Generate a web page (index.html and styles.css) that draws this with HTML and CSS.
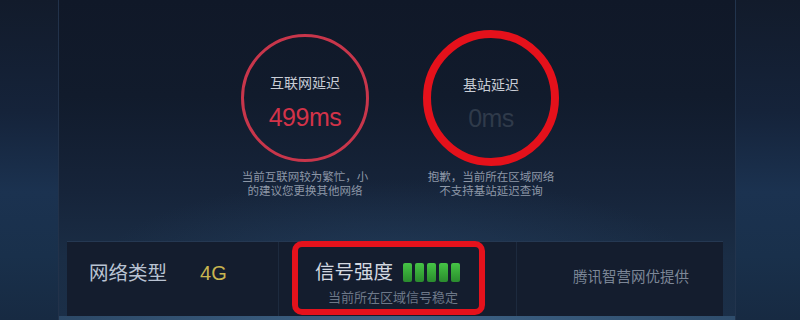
FILE: index.html
```html
<!DOCTYPE html>
<html lang="zh-CN">
<head>
<meta charset="utf-8">
<title>网络延迟</title>
<link rel="stylesheet" href="styles.css">
</head>
<body>
<div class="screen">
  <div class="side side-left"></div>
  <main class="panel">
    <section class="gauges">
      <div class="gauge">
        <div class="ring-wrap">
          <div class="ring ring-net">
            <div class="ring-title">互联网延迟</div>
            <div class="ring-value value-red">499ms</div>
          </div>
        </div>
        <p class="gauge-note">当前互联网较为繁忙，小<br>的建议您更换其他网络</p>
      </div>
      <div class="gauge">
        <div class="ring-wrap">
          <div class="ring ring-base">
            <div class="ring-title">基站延迟</div>
            <div class="ring-value value-dim">0ms</div>
          </div>
        </div>
        <p class="gauge-note">抱歉，当前所在区域网络<br>不支持基站延迟查询</p>
      </div>
    </section>
    <section class="info-row">
      <div class="cell cell-type">
        <span class="label">网络类型</span>
        <span class="type-value">4G</span>
      </div>
      <div class="cell cell-signal">
        <div class="signal-line">
          <span class="label">信号强度</span>
          <span class="bars">
            <i class="bar"></i><i class="bar"></i><i class="bar"></i><i class="bar"></i><i class="bar"></i>
          </span>
        </div>
        <div class="signal-note">当前所在区域信号稳定</div>
        <div class="highlight"></div>
      </div>
      <div class="cell cell-credit">
        <span class="credit">腾讯智营网优提供</span>
      </div>
    </section>
    <div class="bottom-strip"></div>
  </main>
  <div class="side side-right"></div>
</div>
</body>
</html>
```

FILE: styles.css
```css
* { box-sizing: border-box; }
html, body {
  margin: 0;
  padding: 0;
  width: 800px;
  height: 320px;
  overflow: hidden;
  background: #121c2c;
  font-family: "Liberation Sans", "Noto Sans CJK SC", sans-serif;
}
.screen {
  display: flex;
  width: 800px;
  height: 320px;
}
.side {
  height: 320px;
  background: linear-gradient(180deg, #121b2b 0%, #15233a 35%, #1b3250 60%, #19304b 80%, #172a42 100%);
}
.side-left { width: 58px; }
.side-right { flex: 1; }
.panel {
  width: 678px;
  height: 320px;
  display: flex;
  flex-direction: column;
  border-left: 1px solid #22324a;
  border-right: 1px solid #22344d;
  background:
    radial-gradient(ellipse 420px 120px at 50% 82%, rgba(40, 70, 105, 0.45), rgba(40, 70, 105, 0) 70%),
    linear-gradient(180deg, #101828 0%, #111b2c 30%, #16243a 60%, #1a2d45 80%, #1b2f48 100%);
}
.gauges {
  height: 241px;
  display: flex;
  justify-content: center;
  gap: 46px;
  padding-top: 30px;
  padding-left: 2px;
}
.gauge {
  width: 140px;
  display: flex;
  flex-direction: column;
  align-items: center;
}
.ring-wrap {
  width: 140px;
  height: 136px;
  display: flex;
  align-items: center;
  justify-content: center;
}
.ring {
  border-radius: 50%;
  display: flex;
  flex-direction: column;
  align-items: center;
}
.ring-net {
  width: 128px;
  height: 128px;
  border: 3px solid #c8364b;
  padding-top: 37px;
}
.ring-base {
  width: 136px;
  height: 136px;
  border: 8px solid #e5111b;
  padding-top: 38px;
}
.ring-title {
  font-size: 14px;
  line-height: 18px;
  color: #c9cdd5;
}
.ring-value {
  margin-top: 11px;
  font-size: 25px;
  line-height: 28px;
  letter-spacing: -0.5px;
}
.value-red { color: #d23349; }
.value-dim { color: #2f3a4a; margin-top: 10px; }
.gauge-note {
  margin: 4px 0 0;
  font-size: 11.5px;
  line-height: 14px;
  color: #8d97a7;
  text-align: center;
  white-space: nowrap;
}
.info-row {
  height: 75px;
  margin: 0 12px 0 8px;
  display: flex;
  border-top: 1px solid #253852;
  background: #141d2e;
}
.cell {
  height: 100%;
  position: relative;
}
.cell-type {
  width: 212px;
  display: flex;
  align-items: flex-start;
  padding: 18px 0 0 22px;
  border-right: 1px solid #1d2a3e;
}
.label {
  font-size: 19.5px;
  line-height: 26px;
  color: #b9c3d2;
}
.type-value {
  margin-left: 33px;
  font-size: 20px;
  line-height: 26px;
  color: #c8b550;
}
.cell-signal {
  width: 238px;
  padding: 17px 0 0 36px;
  border-right: 1px solid #1d2a3e;
}
.signal-line {
  display: flex;
  align-items: center;
  height: 26px;
}
.signal-line .label { color: #d3d8e0; }
.bars {
  display: flex;
  gap: 3px;
  margin-left: 10px;
}
.bar {
  display: block;
  width: 9px;
  height: 19px;
  border-radius: 2px;
  background: linear-gradient(180deg, #46c446 0%, #36a637 55%, #2a8b2e 100%);
}
.signal-note {
  margin: 5px 0 0 13px;
  font-size: 13px;
  line-height: 16px;
  color: #6d7888;
}
.highlight {
  position: absolute;
  left: 13px;
  top: -1px;
  width: 193px;
  height: 74px;
  border: 6px solid #e5121c;
  border-radius: 10px;
}
.cell-credit {
  flex: 1;
  padding: 25px 0 0 56px;
}
.credit {
  font-size: 14.5px;
  line-height: 20px;
  color: #7d8797;
}
.bottom-strip {
  height: 4px;
  margin-top: 0;
  background: linear-gradient(90deg, #2c4866, #3e6387 50%, #2f4d6c);
}
```
